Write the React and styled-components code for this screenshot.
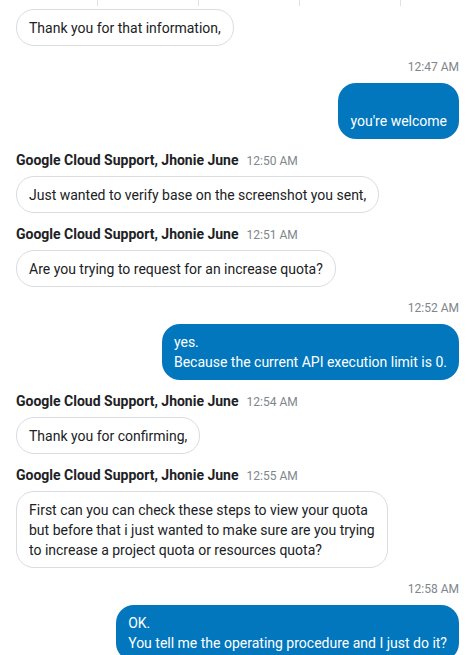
import React from 'react';
import styled, { createGlobalStyle } from 'styled-components';

const Global = createGlobalStyle`
  body {
    margin: 0;
    background: #fff;
    font-family: Roboto, "Liberation Sans", Arial, sans-serif;
    overflow: hidden;
  }
`;

const Page = styled.div`
  padding: 0 14px 0 16px;
  color: #202124;
`;

const Tabs = styled.div`
  display: flex;
  height: 6px;
  margin-left: -16px;
  overflow: hidden;
`;

const Tab = styled.div`
  box-sizing: border-box;
  width: ${p => (p.first ? 98 : 101)}px;
  border-right: 1px solid #e0e0e0;
  flex-shrink: 0;
`;

const Thread = styled.div`
  display: flex;
  flex-direction: column;
  padding-top: 3px;
`;

const Group = styled.div`
  display: flex;
  flex-direction: column;
  align-items: ${p => (p.mine ? 'flex-end' : 'flex-start')};
  margin-top: ${p => (p.first ? 0 : 11)}px;
`;

const Header = styled.div`
  display: flex;
  align-items: baseline;
  height: 20px;
  line-height: 20px;
  margin-bottom: 6px;
`;

const Name = styled.span`
  font-size: 14px;
  font-weight: 700;
  color: #202124;
  margin-right: 8px;
`;

const Time = styled.span`
  font-size: 12px;
  color: #80868b;
`;

const Bubble = styled.div`
  font-size: 14px;
  line-height: 20px;
  white-space: pre-line;
  max-width: 380px;
  border-radius: 18px;
  padding: ${p => (p.mine ? '8px 12px' : '7.5px 12px')};
  background: ${p => (p.mine ? '#0277bd' : '#fff')};
  color: ${p => (p.mine ? '#fff' : '#202124')};
  border: ${p => (p.mine ? 'none' : '1px solid #dadce0')};
`;

const messages = [
  { mine: false, text: 'Thank you for that information,' },
  { mine: true, time: '12:47 AM', text: "\nyou're welcome" },
  { mine: false, time: '12:50 AM', text: 'Just wanted to verify base on the screenshot you sent,' },
  { mine: false, time: '12:51 AM', text: 'Are you trying to request for an increase quota?' },
  { mine: true, time: '12:52 AM', text: 'yes.\nBecause the current API execution limit is 0.' },
  { mine: false, time: '12:54 AM', text: 'Thank you for confirming,' },
  {
    mine: false,
    time: '12:55 AM',
    text:
      'First can you can check these steps to view your quota\nbut before that i just wanted to make sure are you trying\nto increase a project quota or resources quota?',
  },
  { mine: true, time: '12:58 AM', text: 'OK.\nYou tell me the operating procedure and I just do it?' },
];

export default function App() {
  return (
    <>
      <Global />
      <Page>
        <Tabs>
          <Tab first />
          <Tab />
          <Tab />
          <Tab />
          <Tab />
        </Tabs>
        <Thread>
          {messages.map((m, i) => (
            <Group key={i} mine={m.mine} first={i === 0}>
              {m.time && (
                <Header>
                  {!m.mine && <Name>Google Cloud Support, Jhonie June</Name>}
                  <Time>{m.time}</Time>
                </Header>
              )}
              <Bubble mine={m.mine}>{m.text}</Bubble>
            </Group>
          ))}
        </Thread>
      </Page>
    </>
  );
}
